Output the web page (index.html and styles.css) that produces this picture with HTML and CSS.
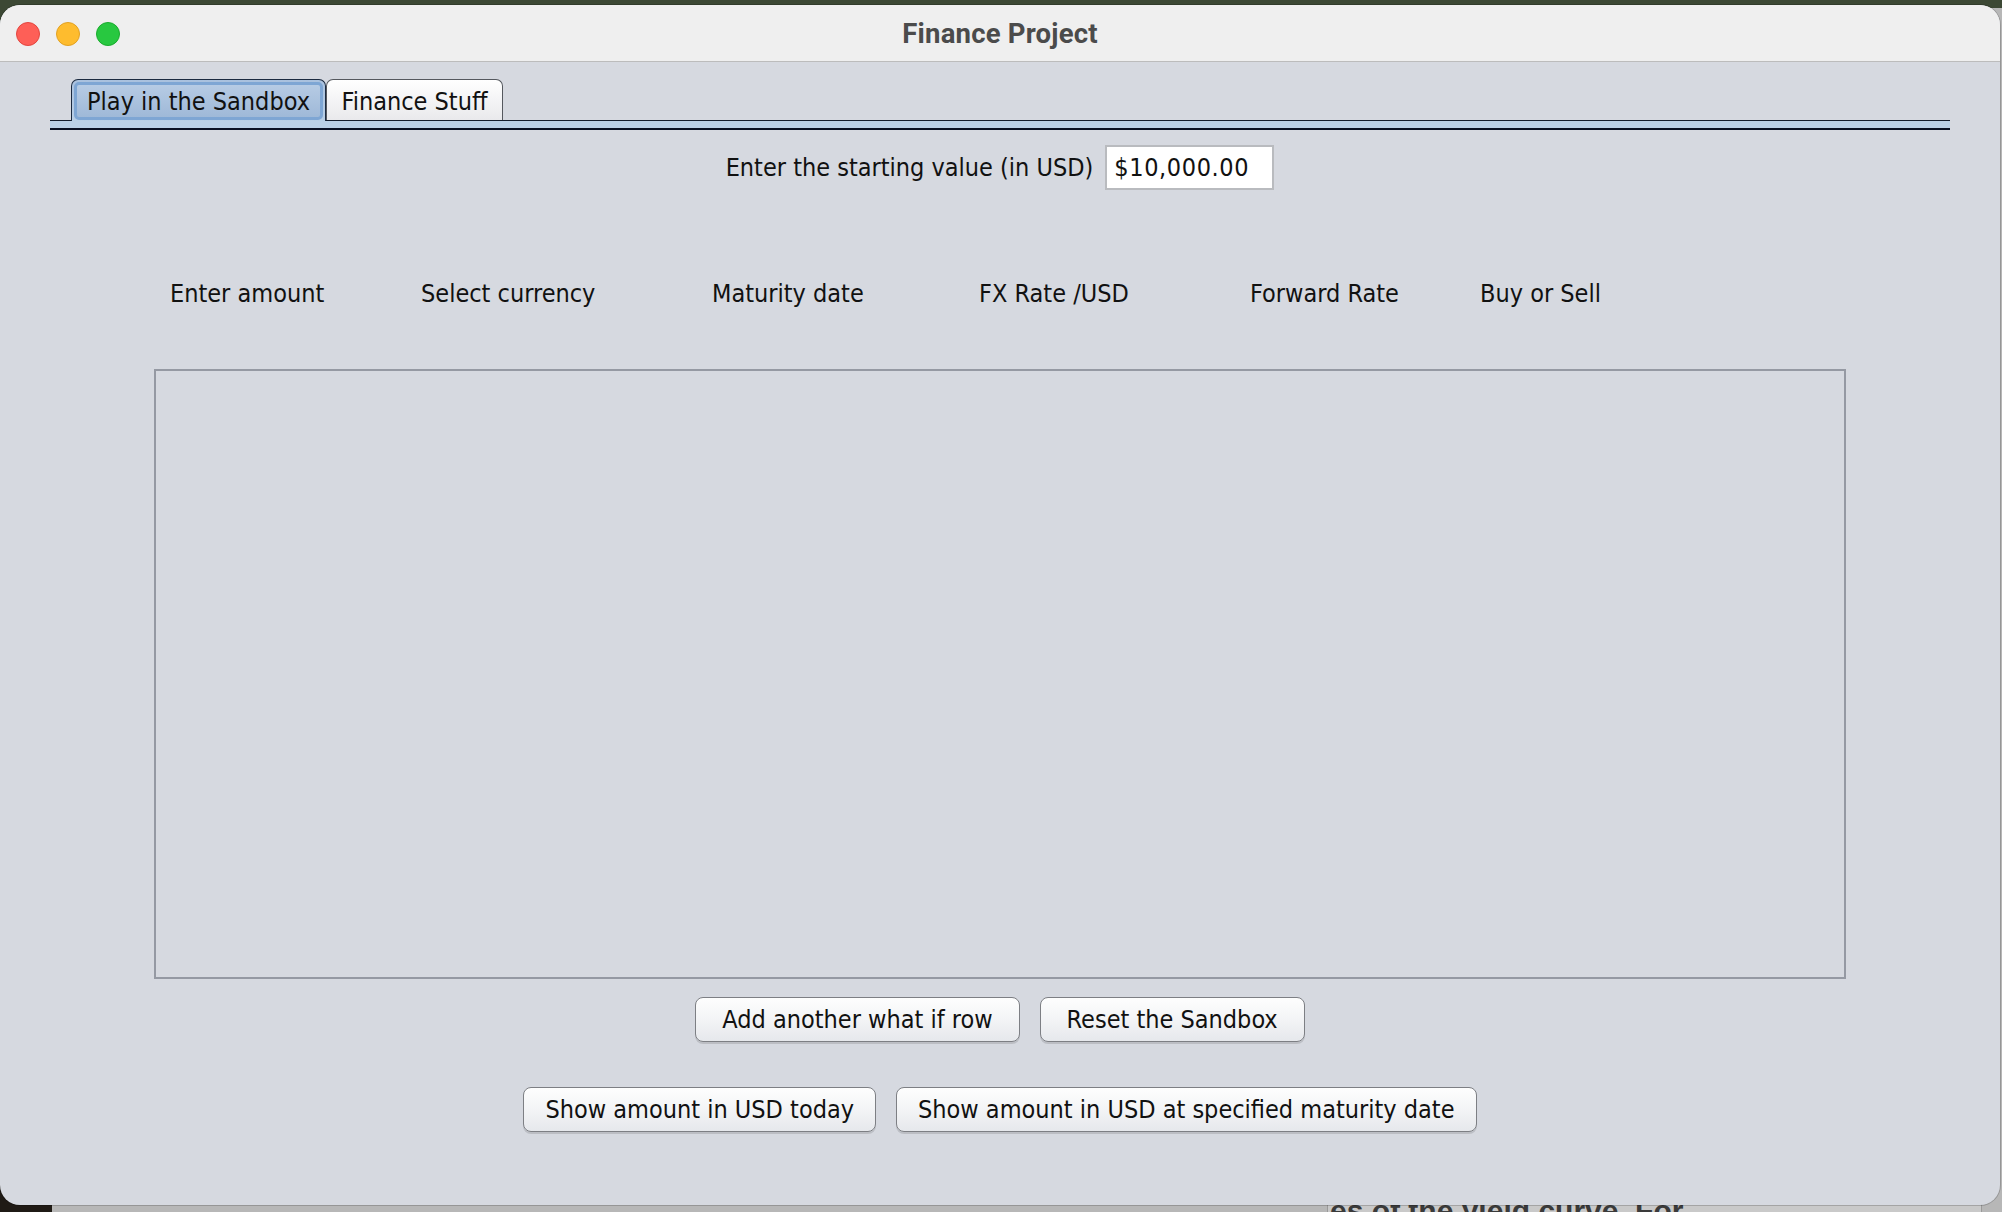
FILE: index.html
```html
<!DOCTYPE html>
<html>
<head>
<meta charset="utf-8">
<title>Finance Project</title>
<link rel="stylesheet" href="styles.css">
</head>
<body>
<div class="desktop">
  <div class="behind"><span class="behind-text">es of the yield curve. For</span></div>
  <div class="window">
    <div class="titlebar">
      <div class="lights">
        <span class="light red"></span>
        <span class="light yellow"></span>
        <span class="light green"></span>
      </div>
      <div class="title">Finance Project</div>
    </div>
    <div class="content">
      <div class="tabs">
        <div class="tab selected"><span class="tab-inner">Play in the Sandbox</span></div>
        <div class="tab"><span class="tab-inner">Finance Stuff</span></div>
      </div>
      <div class="tabline"></div>

      <div class="start-row">
        <span class="label">Enter the starting value (in USD)</span>
        <div class="input">$10,000.00</div>
      </div>

      <div class="headers">
        <span class="label">Enter amount</span>
        <span class="label">Select currency</span>
        <span class="label">Maturity date</span>
        <span class="label">FX Rate /USD</span>
        <span class="label">Forward Rate</span>
        <span class="label">Buy or Sell</span>
      </div>

      <div class="table-box"></div>

      <div class="btn-row first">
        <button class="btn">Add another what if row</button>
        <button class="btn">Reset the Sandbox</button>
      </div>
      <div class="btn-row second">
        <button class="btn">Show amount in USD today</button>
        <button class="btn">Show amount in USD at specified maturity date</button>
      </div>
    </div>
  </div>
</div>
</body>
</html>
```
FILE: styles.css
```css
html, body {
  margin: 0;
  padding: 0;
}
body {
  width: 2002px;
  height: 1212px;
  overflow: hidden;
}
.desktop {
  position: relative;
  width: 2002px;
  height: 1212px;
  background:
    linear-gradient(to right, #1f1a15 0, #1f1a15 52px, transparent 52px),
    linear-gradient(to bottom, #3c4834 0, #3c4834 8px, #b7b7b7 8px, #b7b7b7 100%);
  background-size: 100% 100%, 100% 100%;
  overflow: hidden;
}
.desktop::before {
  content: "";
  position: absolute;
  left: 0;
  top: 0;
  width: 52px;
  height: 600px;
  background: #3c4834;
}
.behind {
  position: absolute;
  left: 1327px;
  top: 1180px;
  width: 653px;
  height: 40px;
  background: #c9c9c9;
  border-left: 1px solid #9a9a9a;
  border-right: 1px solid #9a9a9a;
}
.behind-text {
  position: absolute;
  left: 2px;
  top: 14px;
  font-family: "Liberation Sans", Arial, sans-serif;
  font-weight: bold;
  font-size: 30px;
  color: #3a3a3a;
  white-space: nowrap;
}
.window {
  position: relative;
  z-index: 1;
  margin-top: 5px;
  width: 2000px;
  height: 1200px;
  border-radius: 20px;
  overflow: hidden;
  background: #d6d9e0;
  box-shadow: 0 0 0 1px rgba(0,0,0,0.18);
  display: flex;
  flex-direction: column;
}
.titlebar {
  height: 56px;
  flex: none;
  background: #efefef;
  border-bottom: 1px solid #bcbcbc;
  display: flex;
  align-items: center;
  justify-content: center;
  position: relative;
}
.lights {
  position: absolute;
  left: 16px;
  top: 17px;
  display: flex;
  gap: 16px;
}
.light {
  width: 24px;
  height: 24px;
  border-radius: 50%;
  box-sizing: border-box;
}
.light.red { background: #fe5f57; border: 1px solid #e2463f; }
.light.yellow { background: #febc2e; border: 1px solid #e1a123; }
.light.green { background: #28c840; border: 1px solid #1aab2d; }
.title {
  font-family: Roboto, "Liberation Sans", sans-serif;
  font-weight: 700;
  font-size: 27.5px;
  color: #4b4b4b;
  letter-spacing: 0.2px;
}
.content {
  flex: 1;
  display: flex;
  flex-direction: column;
  font-family: "DejaVu Sans Condensed", "DejaVu Sans", sans-serif;
  font-stretch: condensed;
  font-size: 25px;
  color: #111;
}
.tabs {
  display: flex;
  align-items: flex-end;
  margin: 17px 50px 0 71px;
  height: 41px;
}
.tab {
  box-sizing: border-box;
  height: 41px;
  padding: 3px 3px 0;
  border: 1px solid #55585e;
  border-bottom: none;
  border-radius: 7px 7px 0 0;
  background: linear-gradient(#ffffff, #e9e9ec);
  display: flex;
  position: relative;
  z-index: 2;
}
.tab .tab-inner {
  display: flex;
  align-items: center;
  padding: 0 8px;
  line-height: 1;
}
.tab.selected {
  border-color: #1b2a40;
  height: 42px;
  margin-bottom: -1px;
  padding: 2px 2px 1px;
  background: linear-gradient(#a9c1de, #b9cfe6);
  width: 255px;
}
.tab.selected .tab-inner {
  flex: 1;
  justify-content: center;
  border: 3px solid #7ea6d4;
  border-radius: 5px;
  background: linear-gradient(#b6cbe4, #9fb9d8);
  padding: 0;
}
.tab + .tab {
  width: 177px;
  justify-content: center;
}
.tabline {
  margin: 0 50px;
  height: 7px;
  border-top: 1px solid #141c2c;
  border-bottom: 2px solid #0a1024;
  background: #bbd0e7;
  flex: none;
}
.start-row {
  margin-top: 15px;
  display: flex;
  justify-content: center;
  align-items: center;
  gap: 12px;
  height: 45px;
}
.label {
  line-height: 30px;
  white-space: nowrap;
}
.input {
  box-sizing: border-box;
  width: 169px;
  height: 45px;
  background: #ffffff;
  border: 2px solid #b9bbbf;
  padding: 0 7px;
  display: flex;
  align-items: center;
  letter-spacing: 0.6px;
}
.headers {
  margin: 89px 0 0 170px;
  display: grid;
  grid-template-columns: 251px 291px 267px 271px 230px auto;
}
.table-box {
  margin: 60px 154px 0;
  height: 610px;
  box-sizing: border-box;
  border: 2px solid #9599a3;
  flex: none;
}
.btn-row {
  display: flex;
  justify-content: center;
  gap: 20px;
}
.btn-row.first { margin-top: 18px; }
.btn-row.second { margin-top: 45px; }
.btn {
  font: inherit;
  color: #111;
  height: 45px;
  padding: 0 21px;
  border: 1px solid #7d7f84;
  border-radius: 8px;
  background: linear-gradient(#fefefe 0%, #f3f4f6 50%, #e6e8ec 100%);
  box-shadow: 0 2px 0 rgba(0,0,0,0.12);
  line-height: 1;
}
.btn-row.first .btn {
  padding: 0 26px;
}
```
